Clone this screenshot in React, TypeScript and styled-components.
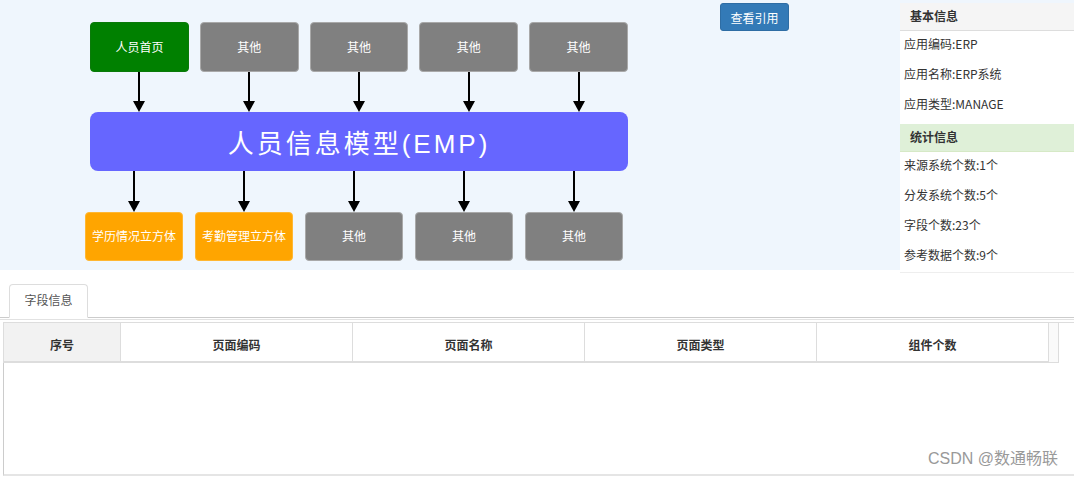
import { styled, createGlobalStyle } from 'styled-components';

const GlobalStyle = createGlobalStyle`
    html, body {
        margin: 0;
        padding: 0;
        background: #FFF;
        overflow: hidden;
    }
    body {
        font-family: "Liberation Sans", "Noto Sans CJK SC", sans-serif;
    }
`

type Node = {
    label: string,
    kind: 'green' | 'gray' | 'orange',
}

const topNodes: Node[] = [
    { label: '人员首页', kind: 'green' },
    { label: '其他', kind: 'gray' },
    { label: '其他', kind: 'gray' },
    { label: '其他', kind: 'gray' },
    { label: '其他', kind: 'gray' },
]

const bottomNodes: Node[] = [
    { label: '学历情况立方体', kind: 'orange' },
    { label: '考勤管理立方体', kind: 'orange' },
    { label: '其他', kind: 'gray' },
    { label: '其他', kind: 'gray' },
    { label: '其他', kind: 'gray' },
]

const baseInfo = ['应用编码:ERP', '应用名称:ERP系统', '应用类型:MANAGE'];
const statInfo = ['来源系统个数:1个', '分发系统个数:5个', '字段个数:23个', '参考数据个数:9个'];

const columns = [
    { title: '序号', width: 117, shaded: true },
    { title: '页面编码', width: 232 },
    { title: '页面名称', width: 232 },
    { title: '页面类型', width: 232 },
    { title: '组件个数', width: 232 },
]

// 아래 방향 화살표
const Arrow = ({ h }: { h: number }) => (
    <svg width="14" height={h} viewBox={`0 0 14 ${h}`}>
        <line x1="7" y1="0" x2="7" y2={h - 10} stroke="#000" strokeWidth="2" />
        <polygon points={`1,${h - 11} 13,${h - 11} 7,${h}`} fill="#000" />
    </svg>
)

function App() {
    return (
        <>
            <GlobalStyle />
            <Page>
                <TopSection>
                    <Canvas>
                        <Diagram>
                            <NodeRow $gap={11} $offset={5}>
                                {topNodes.map((n, i) => (
                                    <NodeBox key={i} $kind={n.kind} $w={99} $h={50}>{n.label}</NodeBox>
                                ))}
                            </NodeRow>
                            <NodeRow $gap={11} $offset={5}>
                                {topNodes.map((_, i) => (
                                    <ArrowCell key={i} $w={99}><Arrow h={40} /></ArrowCell>
                                ))}
                            </NodeRow>
                            <ModelBox>人员信息模型(EMP)</ModelBox>
                            <NodeRow $gap={12} $offset={0}>
                                {bottomNodes.map((_, i) => (
                                    <ArrowCell key={i} $w={98}><Arrow h={41} /></ArrowCell>
                                ))}
                            </NodeRow>
                            <NodeRow $gap={12} $offset={0}>
                                {bottomNodes.map((n, i) => (
                                    <NodeBox key={i} $kind={n.kind} $w={98} $h={49}>{n.label}</NodeBox>
                                ))}
                            </NodeRow>
                        </Diagram>
                        <RefButton>查看引用</RefButton>
                    </Canvas>
                    <Sidebar>
                        <InfoPanel>
                            <PanelHeader $tone="gray">基本信息</PanelHeader>
                            {baseInfo.map((t) => <InfoRow key={t}>{t}</InfoRow>)}
                            <PanelHeader $tone="green">统计信息</PanelHeader>
                            {statInfo.map((t) => <InfoRow key={t}>{t}</InfoRow>)}
                        </InfoPanel>
                    </Sidebar>
                </TopSection>

                <TabBar>
                    <Tab>字段信息</Tab>
                </TabBar>
                <TabUnderline />

                <Table>
                    <HeaderRow>
                        {columns.map((c) => (
                            <HeaderCell key={c.title} $w={c.width} $shaded={!!c.shaded}>{c.title}</HeaderCell>
                        ))}
                        <Gutter />
                    </HeaderRow>
                    <TableBody />
                </Table>

                <Watermark>CSDN @数通畅联</Watermark>
            </Page>
        </>
    )
}

export default App;

const Page = styled.div`
    position: relative;
    width: 1074px;
    height: 477px;
    overflow: hidden;
    background: #FFF;
`

const TopSection = styled.div`
    display: flex;
    height: 275px;
`

const Canvas = styled.div`
    display: flex;
    align-items: flex-start;
    width: 900px;
    height: 270px;
    background: #EFF6FD;
`

const Diagram = styled.div`
    display: flex;
    flex-direction: column;
    padding: 22px 0 0 85px;
    width: 543px;
`

const NodeRow = styled.div<{ $gap: number, $offset: number }>`
    display: flex;
    gap: ${(p) => p.$gap}px;
    margin-left: ${(p) => p.$offset}px;
`

const nodeColors = {
    green: { bg: '#008000', border: '#0A7A0A' },
    gray: { bg: '#808080', border: '#A9A9A9' },
    orange: { bg: '#FFA500', border: '#FFB732' },
}

const NodeBox = styled.div<{ $kind: 'green' | 'gray' | 'orange', $w: number, $h: number }>`
    display: flex;
    align-items: center;
    justify-content: center;
    box-sizing: border-box;
    width: ${(p) => p.$w}px;
    height: ${(p) => p.$h}px;
    padding-bottom: 2px;
    border-radius: 4px;
    border: 1px solid ${(p) => nodeColors[p.$kind].border};
    background: ${(p) => nodeColors[p.$kind].bg};
    color: #FFF;
    font-family: "Noto Sans CJK SC", sans-serif;
    font-size: 12px;
    white-space: nowrap;
`

const ArrowCell = styled.div<{ $w: number }>`
    display: flex;
    justify-content: center;
    width: ${(p) => p.$w}px;
    line-height: 0;
`

const ModelBox = styled.div`
    display: flex;
    align-items: center;
    justify-content: center;
    margin-left: 5px;
    width: 538px;
    height: 59px;
    border-radius: 8px;
    background: #6666FF;
    color: #FFF;
    font-family: "Liberation Sans", "Noto Sans CJK SC", sans-serif;
    font-size: 26px;
    letter-spacing: 3px;
`

const RefButton = styled.div`
    display: flex;
    align-items: center;
    justify-content: center;
    margin: 3px 0 0 92px;
    width: 69px;
    height: 28px;
    box-sizing: border-box;
    border: 1px solid #2E6DA4;
    border-radius: 3px;
    background: #337AB7;
    color: #FFF;
    font-family: "Noto Sans CJK SC", sans-serif;
    font-size: 12px;
`

const Sidebar = styled.div`
    flex: 1 0 0;
    display: flex;
    flex-direction: column;
    background: linear-gradient(#EFF6FD 0 3px, #FFF 3px);
`

const InfoPanel = styled.div`
    display: flex;
    flex-direction: column;
    margin-top: 3px;
    background: #FFF;
    border-bottom: 1px solid #EEE;
`

const PanelHeader = styled.div<{ $tone: 'gray' | 'green' }>`
    display: flex;
    align-items: center;
    box-sizing: border-box;
    height: 28px;
    padding: 0 0 3px 10px;
    margin-top: ${(p) => p.$tone === 'green' ? '3px' : '0'};
    background: ${(p) => p.$tone === 'green' ? '#DFF0D8' : '#F5F5F5'};
    border-bottom: 1px solid ${(p) => p.$tone === 'green' ? '#D6E9C6' : '#DDD'};
    color: #333;
    font-family: "Noto Sans CJK SC", sans-serif;
    font-size: 12px;
    font-weight: 700;
`

const InfoRow = styled.div`
    display: flex;
    align-items: center;
    box-sizing: border-box;
    height: 30px;
    padding: 0 0 6px 4px;
    color: #333;
    font-family: "Noto Sans CJK SC", sans-serif;
    font-size: 12px;
`

const TabBar = styled.div`
    display: flex;
    align-items: flex-end;
    height: 47px;
    padding-left: 9px;
    margin-top: -5px;
    border-bottom: 1px solid #CCC;
`

const Tab = styled.div`
    display: flex;
    align-items: center;
    justify-content: center;
    width: 79px;
    height: 34px;
    box-sizing: border-box;
    padding-bottom: 3px;
    margin-bottom: -1px;
    border: 1px solid #DDD;
    border-bottom: 1px solid #FFF;
    border-radius: 4px 4px 0 0;
    background: #FFF;
    color: #555;
    font-family: "Noto Sans CJK SC", sans-serif;
    font-size: 12px;
`

const TabUnderline = styled.div`
    height: 1px;
    margin-top: 1px;
    background: #E2E2E2;
`

const Table = styled.div`
    display: flex;
    flex-direction: column;
    margin: 2px 0 0 3px;
`

const HeaderRow = styled.div`
    display: flex;
    height: 40px;
    border-top: 1px solid #DDD;
    border-left: 1px solid #DDD;
`

const HeaderCell = styled.div<{ $w: number, $shaded: boolean }>`
    display: flex;
    align-items: center;
    justify-content: center;
    width: ${(p) => p.$w}px;
    box-sizing: border-box;
    padding-top: 4px;
    border-right: 1px solid #DDD;
    border-bottom: 2px solid #DDD;
    background: ${(p) => p.$shaded ? '#F2F2F2' : '#FFF'};
    color: #333;
    font-family: "Noto Sans CJK SC", sans-serif;
    font-size: 12px;
    font-weight: 700;
`

const Gutter = styled.div`
    width: 10px;
    box-sizing: border-box;
    border-right: 1px solid #DDD;
    border-bottom: 1px solid #DDD;
    background: #FAFAFA;
`

const TableBody = styled.div`
    height: 111px;
    border-left: 1px solid #CCC;
    border-bottom: 2px solid #E5E5E5;
`

const Watermark = styled.div`
    position: absolute;
    right: 16px;
    bottom: 8px;
    color: #999;
    font-family: "Liberation Sans", "Noto Sans CJK SC", sans-serif;
    font-size: 16px;
`
